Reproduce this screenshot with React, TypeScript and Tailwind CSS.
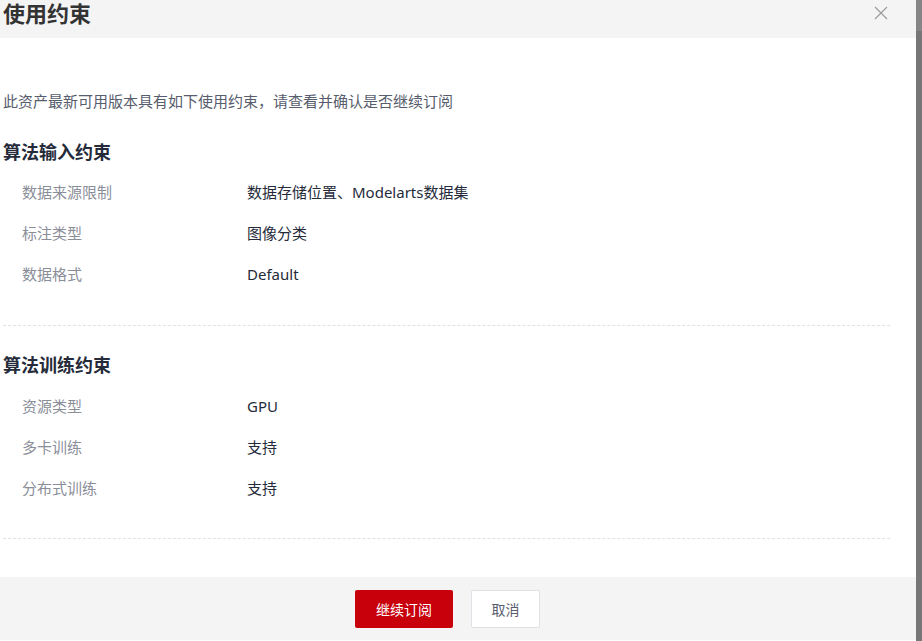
import React from 'react';

interface Row {
    label: string;
    value: string;
}

const inputRows: Row[] = [
    { label: '数据来源限制', value: '数据存储位置、Modelarts数据集' },
    { label: '标注类型', value: '图像分类' },
    { label: '数据格式', value: 'Default' },
];

const trainRows: Row[] = [
    { label: '资源类型', value: 'GPU' },
    { label: '多卡训练', value: '支持' },
    { label: '分布式训练', value: '支持' },
];

function Rows({ rows }: { rows: Row[] }) {
    return (
        <div className="flex flex-col">
            {rows.map((r) => (
                <div key={r.label} className="flex h-[41px] items-center text-[15px]">
                    <span className="w-[244px] pl-[19px] text-[#8a8e99]">{r.label}</span>
                    <span className="text-[#252b3a]">{r.value}</span>
                </div>
            ))}
        </div>
    );
}

export default function App() {
    return (
        <div
            className="flex h-[641px] w-[922px] overflow-hidden bg-white"
            style={{ fontFamily: '"Noto Sans", "Noto Sans CJK SC", sans-serif' }}
        >
            <div className="flex w-[916px] flex-col">
                {/* Header */}
                <header className="flex h-[38px] shrink-0 items-start justify-between bg-[#f4f4f4] pl-[3px] pr-[28px] pt-[2px]">
                    <h1 className="text-[22px] font-semibold leading-[22px] text-[#333]">使用约束</h1>
                    <button className="mt-[4px] text-[#999]">
                        <svg width="14" height="14" viewBox="0 0 14 14" fill="none" stroke="currentColor" strokeWidth="1.1">
                            <path d="M1 1L13 13M13 1L1 13" />
                        </svg>
                    </button>
                </header>

                {/* Body */}
                <main className="flex-1 pl-[3px] pr-[26px] pt-[53px]">
                    <p className="text-[15px] leading-[20px] text-[#575d6c]">
                        此资产最新可用版本具有如下使用约束，请查看并确认是否继续订阅
                    </p>

                    <h2 className="mt-[29px] text-[18px] font-bold leading-[24px] text-[#252b3a]">算法输入约束</h2>
                    <div className="mt-[8px]">
                        <Rows rows={inputRows} />
                    </div>
                    <div className="mt-[30px] border-t border-dashed border-[#dfe1e6]" />

                    <h2 className="mt-[27px] text-[18px] font-bold leading-[24px] text-[#252b3a]">算法训练约束</h2>
                    <div className="mt-[9px]">
                        <Rows rows={trainRows} />
                    </div>
                    <div className="mt-[29px] border-t border-dashed border-[#dfe1e6]" />
                </main>

                {/* Footer */}
                <footer className="mb-[1px] flex h-[63px] shrink-0 justify-center gap-[18px] bg-[#f4f4f4] pr-[21px] pt-[13px]">
                    <button className="h-[38px] w-[98px] rounded-[2px] bg-[#c7000b] text-[14px] text-white">继续订阅</button>
                    <button className="h-[38px] w-[69px] rounded-[2px] border border-[#dfe1e6] bg-white text-[14px] text-[#575d6c]">
                        取消
                    </button>
                </footer>
            </div>

            {/* Scrollbar strip */}
            <div className="flex w-[6px] flex-col">
                <div className="h-[31px] bg-[#858585]" />
                <div className="flex-1 bg-[#777777]" />
            </div>
        </div>
    );
}
